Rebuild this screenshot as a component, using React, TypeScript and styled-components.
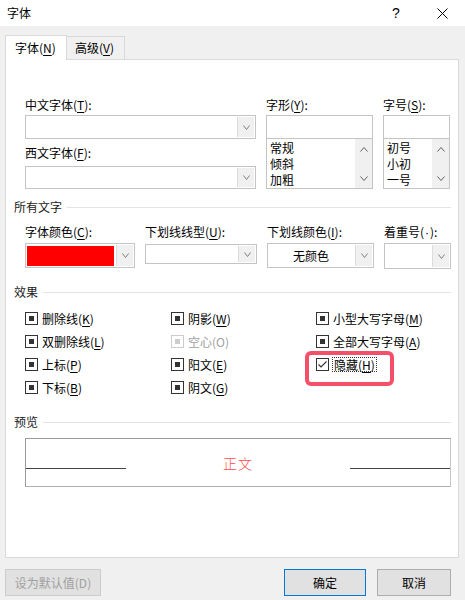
import React from 'react';
import styled, { createGlobalStyle } from 'styled-components';

const Global = createGlobalStyle`
  html, body { margin: 0; padding: 0; background: #f0f0f0; }
  body {
    font-family: "Noto Sans CJK SC", "Noto Sans", sans-serif;
    font-size: 12px;
    color: #000;
  }
  * { box-sizing: border-box; }
`;

const Window = styled.div`
  width: 465px;
  height: 600px;
  display: flex;
  flex-direction: column;
  background: #f0f0f0;
  overflow: hidden;
`;

const TitleBar = styled.div`
  height: 26px;
  flex: none;
  background: #fff;
  display: flex;
  align-items: center;
  padding-left: 7px;
`;

const Title = styled.div`
  flex: 1;
  font-size: 12px;
  line-height: 16px;
`;

const TitleButton = styled.div`
  width: 46px;
  height: 26px;
  display: flex;
  align-items: center;
  justify-content: center;
  font-family: "Liberation Sans", sans-serif;
  font-size: 14px;
`;

const Body = styled.div`
  flex: 1;
  display: flex;
  flex-direction: column;
  padding: 9px 6px 0 5px;
`;

const TabRow = styled.div`
  display: flex;
  align-items: flex-end;
  height: 25px;
  margin-bottom: -1px;
  position: relative;
  z-index: 1;
`;

const Tab = styled.div<{ $active?: boolean; $w: number }>`
  width: ${(p) => p.$w}px;
  height: ${(p) => (p.$active ? 25 : 23)}px;
  margin-bottom: ${(p) => (p.$active ? 0 : 1)}px;
  background: ${(p) => (p.$active ? '#fff' : '#f0f0f0')};
  border: 1px solid #d9d9d9;
  border-bottom: none;
  ${(p) => (p.$active ? '' : 'border-left: none;')}
  display: flex;
  align-items: center;
  padding-left: ${(p) => (p.$active ? 9 : 8)}px;
  line-height: 16px;
`;

const Panel = styled.div`
  height: 499px;
  flex: none;
  background: #fff;
  border: 1px solid #d9d9d9;
  padding: 37px 7px 0 8px;
  display: flex;
  flex-direction: column;
`;

const U = styled.span`
  text-decoration: underline;
  text-underline-offset: 2px;
`;

const Dot = styled.span`
  font-family: "Liberation Sans", sans-serif;
  padding: 0 1px;
`;

const Label = styled.div<{ $mt?: number }>`
  height: 16px;
  line-height: 16px;
  margin-top: ${(p) => p.$mt ?? 0}px;
  white-space: nowrap;
  color: #000;
`;

const FontGrid = styled.div`
  margin-left: 11px;
  display: grid;
  grid-template-columns: 231px 107px 67px;
  column-gap: 10px;
`;

const Column = styled.div`
  display: flex;
  flex-direction: column;
`;

const Combo = styled.div<{ $h: number; $mt?: number }>`
  height: ${(p) => p.$h}px;
  margin-top: ${(p) => p.$mt ?? 0}px;
  border: 1px solid #c4c4c4;
  background: #fff;
  display: flex;
`;

const ComboValue = styled.div<{ $center?: boolean }>`
  flex: 1;
  display: flex;
  align-items: center;
  justify-content: ${(p) => (p.$center ? 'center' : 'flex-start')};
  line-height: 16px;
`;

const Swatch = styled.div<{ $color: string }>`
  flex: 1;
  margin: 2px 1px 1px 1px;
  background: ${(p) => p.$color};
`;

const DropButton = styled.div`
  width: 17px;
  margin: 1px;
  background: #f0f0f0;
  border-left: 1px solid #dcdcdc;
  display: flex;
  align-items: center;
  justify-content: center;
  flex: none;
`;

const TextBox = styled.div`
  height: 24px;
  margin-top: 2px;
  border: 1px solid #c4c4c4;
  background: #fff;
`;

const ListBox = styled.div`
  height: 50px;
  border: 1px solid #c4c4c4;
  border-top: none;
  background: #fff;
  display: flex;
  overflow: hidden;
`;

const ListItems = styled.div`
  flex: 1;
  padding: 1px 0 0 3px;
  display: flex;
  flex-direction: column;
`;

const ListItem = styled.div`
  height: 16px;
  line-height: 16px;
  white-space: nowrap;
`;

const ScrollBar = styled.div`
  width: 17px;
  flex: none;
  background: #f0f0f0;
  display: flex;
  flex-direction: column;
  justify-content: space-between;
  align-items: center;
  padding: 8px 0 7px;
`;

const GroupHeader = styled.div<{ $mt: number }>`
  display: flex;
  align-items: center;
  height: 16px;
  margin-top: ${(p) => p.$mt}px;
`;

const GroupTitle = styled.span`
  line-height: 16px;
  margin-right: 5px;
  color: #1a1a1a;
`;

const GroupLine = styled.span`
  flex: 1;
  height: 1px;
  background: #e3e3e3;
`;

const ColorGrid = styled.div`
  margin-left: 11px;
  margin-top: 9px;
  display: grid;
  grid-template-columns: 110px 112px 107px 67px;
  column-gap: 10px;
  align-items: start;
`;

const EffectGrid = styled.div`
  margin-left: 11px;
  margin-top: 7px;
  display: grid;
  grid-template-columns: 146px 145px 1fr;
  grid-auto-rows: 23px;
`;

const CheckItem = styled.div<{ $disabled?: boolean }>`
  position: relative;
  display: flex;
  align-items: center;
  gap: 4px;
  color: ${(p) => (p.$disabled ? '#a0a0a0' : '#000')};
  white-space: nowrap;
`;

const Box = styled.span<{ $disabled?: boolean }>`
  width: 13px;
  height: 13px;
  flex: none;
  border: 1px solid ${(p) => (p.$disabled ? '#cccccc' : '#333333')};
  background: #fff;
  display: flex;
  align-items: center;
  justify-content: center;
`;

const BoxFill = styled.span<{ $disabled?: boolean }>`
  width: 5px;
  height: 5px;
  background: ${(p) => (p.$disabled ? '#cccccc' : '#333333')};
`;

const FocusText = styled.span`
  outline: 1px dotted #333;
  outline-offset: 0px;
  padding: 0 1px;
  line-height: 13px;
`;

const Highlight = styled.div`
  position: absolute;
  left: -11px;
  top: -2px;
  width: 89px;
  height: 35px;
  border: 4px solid #f4506a;
  border-radius: 6px;
  pointer-events: none;
`;

const PreviewBox = styled.div`
  margin: 8px 0 0 11px;
  height: 49px;
  border: 1px solid;
  border-color: #9a9a9a #c8c8c8 #b0b0b0 #9a9a9a;
  display: flex;
  align-items: center;
  justify-content: space-between;
`;

const PreviewLine = styled.div`
  width: 100px;
  height: 1px;
  margin-top: 11px;
  background: #444;
`;

const PreviewText = styled.div`
  color: #ff4d4d;
  font-size: 14px;
  line-height: 18px;
  font-weight: 300;
  letter-spacing: 1px;
`;

const Footer = styled.div`
  display: flex;
  justify-content: space-between;
  padding: 11px 8px 0 0;
`;

const ButtonGroup = styled.div`
  display: flex;
  gap: 11px;
`;

const Button = styled.button<{ $w: number; $primary?: boolean }>`
  width: ${(p) => p.$w}px;
  height: 27px;
  padding: 0;
  background: #e1e1e1;
  border: 1px solid
    ${(p) => (p.$primary ? '#0078d7' : p.disabled ? '#cccccc' : '#adadad')};
  font-family: inherit;
  font-size: 12px;
  color: ${(p) => (p.disabled ? '#a0a0a0' : '#000')};
`;

const Chevron = ({ dir = 'down', color = '#808080', w = 7 }: { dir?: 'up' | 'down'; color?: string; w?: number }) => {
  const h = Math.round(w / 2) + 1;
  const pts =
    dir === 'down'
      ? `0.5,0.5 ${w / 2},${h - 0.5} ${w - 0.5},0.5`
      : `0.5,${h - 0.5} ${w / 2},0.5 ${w - 0.5},${h - 0.5}`;
  return (
    <svg width={w} height={h} viewBox={`0 0 ${w} ${h}`}>
      <polyline points={pts} fill="none" stroke={color} strokeWidth="1" />
    </svg>
  );
};

const CloseIcon = () => (
  <svg width="11" height="11" viewBox="0 0 11 11">
    <path d="M0.5 0.5 L10.5 10.5 M10.5 0.5 L0.5 10.5" stroke="#000" strokeWidth="1" fill="none" />
  </svg>
);

const CheckMark = () => (
  <svg width="11" height="11" viewBox="0 0 11 11">
    <polyline points="1.5,5.5 4,8 9.5,2.5" fill="none" stroke="#333" strokeWidth="1.1" />
  </svg>
);

const Drop = () => (
  <DropButton>
    <Chevron />
  </DropButton>
);

type Effect = { text: string; key?: string; disabled?: boolean; checked?: boolean; focus?: boolean; empty?: boolean };

const effects: Effect[] = [
  { text: '删除线', key: 'K' },
  { text: '阴影', key: 'W' },
  { text: '小型大写字母', key: 'M' },
  { text: '双删除线', key: 'L' },
  { text: '空心(O)', disabled: true },
  { text: '全部大写字母', key: 'A' },
  { text: '上标', key: 'P' },
  { text: '阳文', key: 'E' },
  { text: '隐藏', key: 'H', checked: true, focus: true },
  { text: '下标', key: 'B' },
  { text: '阴文', key: 'G' },
  { text: '', empty: true },
];

const EffectLabel = ({ e }: { e: Effect }) =>
  e.key ? (
    <>
      {e.text}(<U>{e.key}</U>)
    </>
  ) : (
    <>{e.text}</>
  );

const Effects = () => (
  <EffectGrid>
    {effects.map((e, i) =>
      e.empty ? (
        <div key={i} />
      ) : (
        <CheckItem key={i} $disabled={e.disabled}>
          <Box $disabled={e.disabled}>{e.checked ? <CheckMark /> : <BoxFill $disabled={e.disabled} />}</Box>
          {e.focus ? (
            <FocusText>
              <EffectLabel e={e} />
            </FocusText>
          ) : (
            <span>
              <EffectLabel e={e} />
            </span>
          )}
          {e.focus && <Highlight />}
        </CheckItem>
      )
    )}
  </EffectGrid>
);

const List = ({ items }: { items: string[] }) => (
  <ListBox>
    <ListItems>
      {items.map((t) => (
        <ListItem key={t}>{t}</ListItem>
      ))}
    </ListItems>
    <ScrollBar>
      <Chevron dir="up" color="#606060" w={8} />
      <Chevron dir="down" color="#606060" w={8} />
    </ScrollBar>
  </ListBox>
);

export default function App() {
  return (
    <>
      <Global />
      <Window>
        <TitleBar>
          <Title>字体</Title>
          <TitleButton>?</TitleButton>
          <TitleButton>
            <CloseIcon />
          </TitleButton>
        </TitleBar>
        <Body>
          <TabRow>
            <Tab $active $w={62}>
              字体(<U>N</U>)
            </Tab>
            <Tab $w={58}>
              高级(<U>V</U>)
            </Tab>
          </TabRow>
          <Panel>
            <FontGrid>
              <Column>
                <Label>
                  中文字体(<U>T</U>):
                </Label>
                <Combo $h={24} $mt={2}>
                  <ComboValue />
                  <Drop />
                </Combo>
                <Label $mt={6}>
                  西文字体(<U>F</U>):
                </Label>
                <Combo $h={23} $mt={5}>
                  <ComboValue />
                  <Drop />
                </Combo>
              </Column>
              <Column>
                <Label>
                  字形(<U>Y</U>):
                </Label>
                <TextBox />
                <List items={['常规', '倾斜', '加粗']} />
              </Column>
              <Column>
                <Label>
                  字号(<U>S</U>):
                </Label>
                <TextBox />
                <List items={['初号', '小初', '一号']} />
              </Column>
            </FontGrid>

            <GroupHeader $mt={10}>
              <GroupTitle>所有文字</GroupTitle>
              <GroupLine />
            </GroupHeader>
            <ColorGrid>
              <Column>
                <Label>
                  字体颜色(<U>C</U>):
                </Label>
                <Combo $h={25} $mt={3}>
                  <Swatch $color="#ff0000" />
                  <Drop />
                </Combo>
              </Column>
              <Column>
                <Label>
                  下划线线型(<U>U</U>):
                </Label>
                <Combo $h={20} $mt={4}>
                  <ComboValue />
                  <Drop />
                </Combo>
              </Column>
              <Column>
                <Label>
                  下划线颜色(<U>I</U>):
                </Label>
                <Combo $h={25} $mt={3}>
                  <ComboValue $center>无颜色</ComboValue>
                  <Drop />
                </Combo>
              </Column>
              <Column>
                <Label>
                  着重号(<Dot>·</Dot>):
                </Label>
                <Combo $h={26} $mt={3}>
                  <ComboValue />
                  <Drop />
                </Combo>
              </Column>
            </ColorGrid>

            <GroupHeader $mt={15}>
              <GroupTitle>效果</GroupTitle>
              <GroupLine />
            </GroupHeader>
            <Effects />

            <GroupHeader $mt={15}>
              <GroupTitle>预览</GroupTitle>
              <GroupLine />
            </GroupHeader>
            <PreviewBox>
              <PreviewLine />
              <PreviewText>正文</PreviewText>
              <PreviewLine />
            </PreviewBox>
          </Panel>
          <Footer>
            <Button $w={96} disabled>
              设为默认值(D)
            </Button>
            <ButtonGroup>
              <Button $w={82} $primary>
                确定
              </Button>
              <Button $w={74}>取消</Button>
            </ButtonGroup>
          </Footer>
        </Body>
      </Window>
    </>
  );
}
